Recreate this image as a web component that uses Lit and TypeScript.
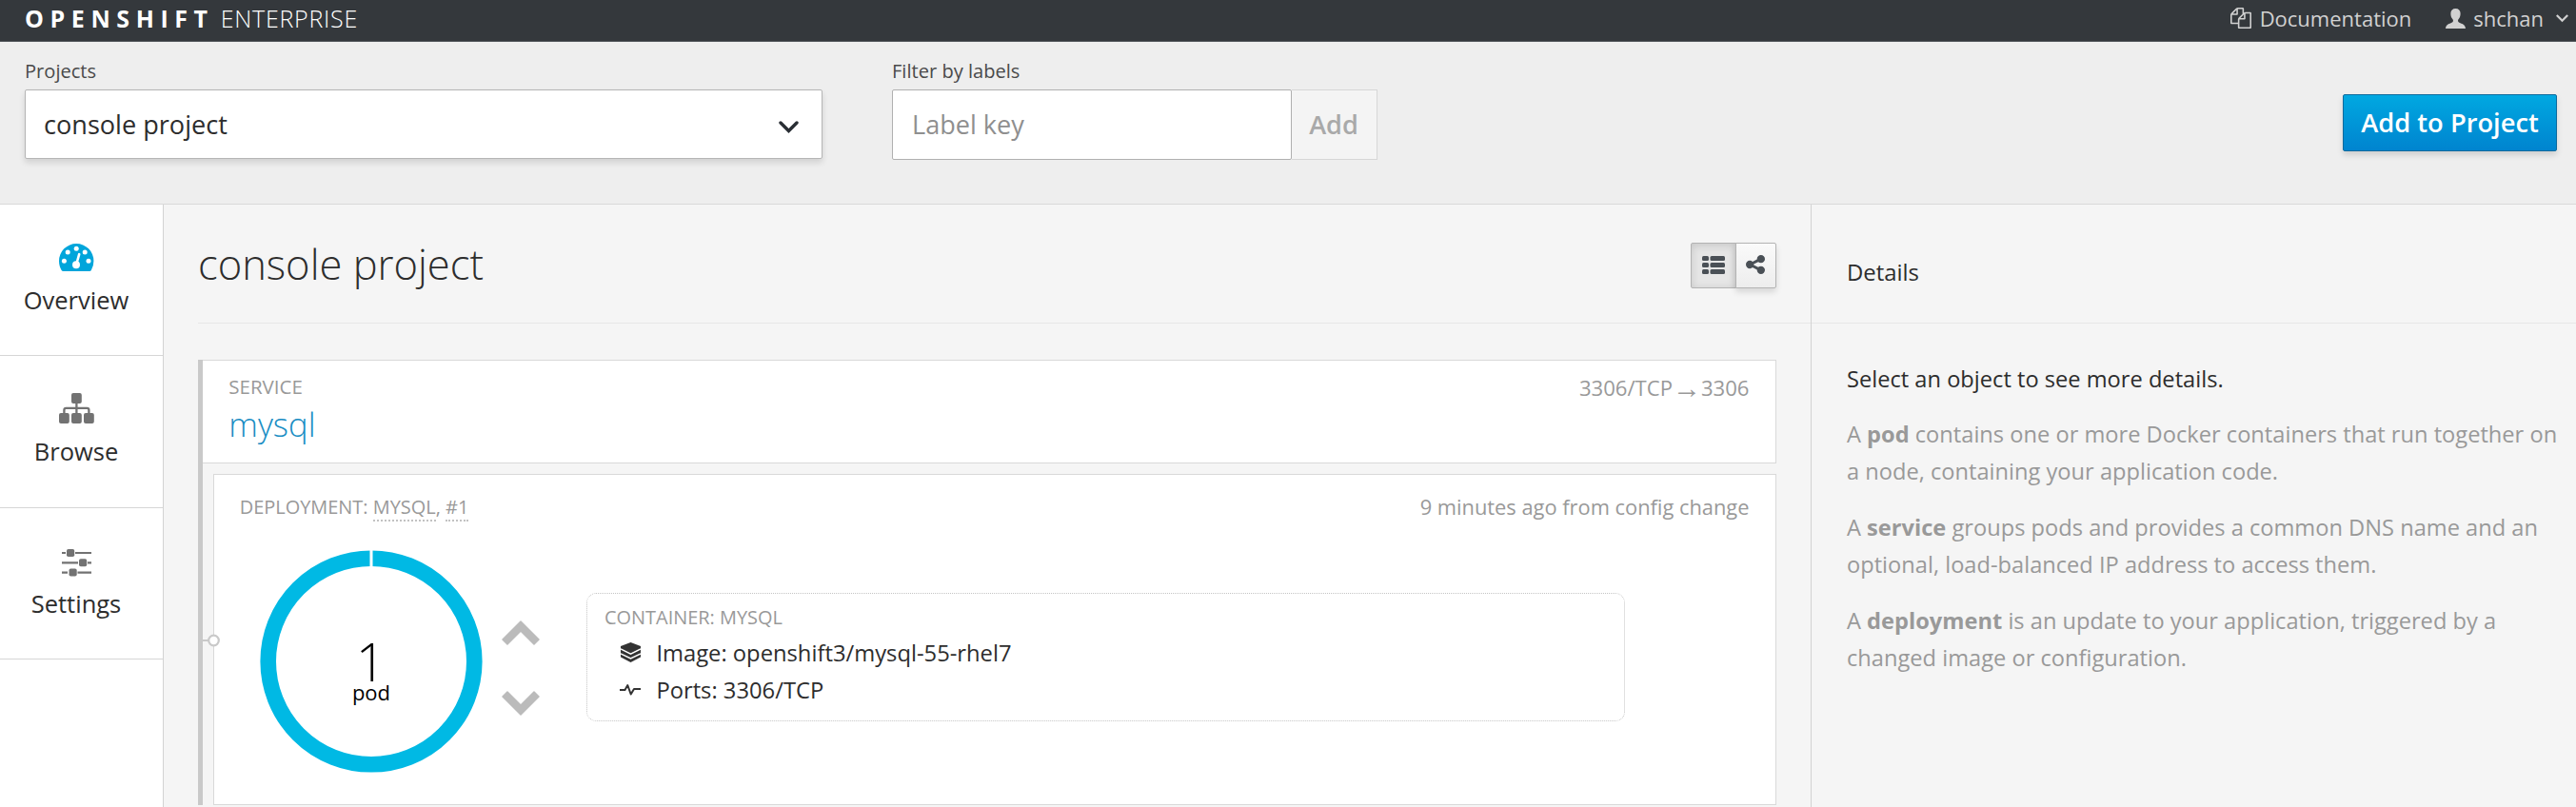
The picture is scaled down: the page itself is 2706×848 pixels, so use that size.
import { LitElement, html, css, svg } from "lit";
import { customElement } from "lit/decorators.js";

const docsIcon = html`<svg class="docs-icon" viewBox="0 0 1792 1792"><path fill="currentColor" d="M1696 384q40 0 68 28t28 68v1216q0 40-28 68t-68 28h-960q-40 0-68-28t-28-68v-288h-544q-40 0-68-28t-28-68v-672q0-40 20-88t48-76l408-408q28-28 76-48t88-20h416q40 0 68 28t28 68v328q68-40 128-40h416zm-544 213l-299 299h299v-299zm-640-384l-299 299h299v-299zm196 647l316-316v-416h-384v416q0 40-28 68t-68 28h-416v640h512v-256q0-40 20-88t48-76zm956 804v-1152h-384v416q0 40-28 68t-68 28h-416v640h896z"/></svg>`;

const userIcon = html`<svg class="user-icon" viewBox="0 0 21 21"><path fill="currentColor" d="M10.5 0C7.3 0 5.4 2 5.4 5c0 1.900.3 3.600 1.200 5 .6 1 1.400 1.700 1.400 2.700 0 1.300-1 1.900-2.500 2.500C2.700 16.300.3 17.200 0 21h21c-.3-3.800-2.700-4.700-5.500-5.800-1.500-.6-2.500-1.200-2.500-2.500 0-1 .8-1.700 1.400-2.700.9-1.400 1.200-3.100 1.200-5 0-3-1.900-5-5.100-5z"/></svg>`;

const overviewIcon = svg`<g transform="translate(0 -1)">
  <path fill="#00a5db" d="M18.200 3A18.200 18.200 0 0 0 0 21.200c0 3.600 1 6.900 2.600 9.700.4.700 1 1.100 1.800 1.100h27.600c.8 0 1.400-.4 1.800-1.100a18.200 18.200 0 0 0 2.600-9.700A18.200 18.200 0 0 0 18.200 3z"/>
  <g fill="#fff"><circle cx="5.400" cy="21.200" r="2.500"/><circle cx="9.200" cy="12.100" r="2.500"/><circle cx="18.200" cy="8.200" r="2.500"/><circle cx="27.200" cy="12.100" r="2.500"/><circle cx="31" cy="21.200" r="2.500"/><circle cx="18" cy="25.300" r="4"/></g>
  <path stroke="#fff" stroke-width="2.600" stroke-linecap="round" d="M18.300 24.500l2.900-10.300"/></g>`;

const browseIcon = svg`
  <g fill="#727272"><rect x="13" y="0" width="10.800" height="11" rx="2"/><rect x="0" y="21" width="10.800" height="11" rx="2"/><rect x="13" y="21" width="10.800" height="11" rx="2"/><rect x="26" y="21" width="10.800" height="11" rx="2"/></g>
  <path fill="none" stroke="#727272" stroke-width="2.300" d="M18.400 10v12M5.400 22v-4.200q0-2 2-2h22q2 0 2 2V22"/>`;

const settingsIcon = svg`
  <path stroke="#727272" stroke-width="2.200" d="M3 8h4M17 8h17M3 18.300h17M30 18.300h4M3 28.600h6M19.500 28.600h14.500"/>
  <g fill="#727272"><rect x="8" y="4" width="8.200" height="8" rx="1.800"/><rect x="21" y="14.300" width="8.200" height="8" rx="1.800"/><rect x="10.500" y="24.600" width="8.200" height="8" rx="1.800"/></g>`;

const navItems = [
  { label: "Overview", icon: overviewIcon },
  { label: "Browse", icon: browseIcon },
  { label: "Settings", icon: settingsIcon },
];

@customElement("app-root")
export class AppRoot extends LitElement {
  static styles = css`
    :host { display: flex; flex-direction: column; height: 848px; overflow: hidden; background: #f5f5f5; color: #2d2d2d; font-family: "Open Sans", sans-serif; }
    * { box-sizing: border-box; }
    svg { display: block; flex: none; }
    .topbar { height: 44px; flex: none; display: flex; align-items: center; justify-content: space-between; padding: 0 8px 6px 26px; background: #34383c; border-bottom: 1px solid #53585c; color: #d1d1d1; line-height: 30px; }
    .brand { display: flex; color: #fff; font-size: 25px; white-space: nowrap; }
    .brand-name { font-weight: 700; letter-spacing: 6.600px; }
    .brand-edition { font-weight: 300; letter-spacing: 0.750px; margin-left: 7px; }
    .account { display: flex; align-items: center; font-size: 22px; }
    .docs-icon { width: 22px; height: 22px; margin-right: 8.500px; }
    .user-icon { width: 21px; height: 21px; margin: 2px 8px 0 36px; }
    .caret { margin: 2px 0 0 13px; }

    .filters { height: 171px; flex: none; display: flex; align-items: flex-start; padding: 21px 20px 0 26px; background: #eee; border-bottom: 1px solid #d9d9d9; }
    .label { font-size: 20.100px; line-height: 20px; margin-bottom: 9px; color: #4a4a4a; }
    .select { width: 838px; height: 73px; display: flex; align-items: center; justify-content: space-between; padding: 0 24px 0 19px; font-size: 27.100px; background: #fff; border: 1px solid #b5b5b5; border-radius: 2px; box-shadow: 0 4px 6px rgba(0,0,0,.12); }
    .chevron { margin-top: 5px; }
    .filter { margin-left: 73px; }
    .input-row { display: flex; font-size: 27.100px; line-height: 72px; }
    .input { width: 420px; height: 74px; padding-left: 20px; background: #fff; border: 1px solid #b0b0b0; border-radius: 2px; color: #8f8f8f; }
    .add { width: 90px; height: 74px; padding-right: 1px; text-align: center; font-weight: 600; color: #a9a9a9; background: #f4f4f4; border: 1px solid #d6d6d6; border-left: 0; }
    .primary { width: 225px; height: 60px; margin: 34px 0 0 auto; border: 1px solid #0b6a9d; border-radius: 2px; background: linear-gradient(#00a8e1, #0084cf); box-shadow: 0 4px 6px rgba(0,0,0,.13); color: #fff; font-size: 27.300px; font-weight: 600; line-height: 57px; text-align: center; }

    .body { flex: 1; min-height: 0; display: flex; }
    .sidebar { width: 172px; flex: none; background: #fff; border-right: 1px solid #d3d3d3; }
    .nav-item { height: 159.330px; display: flex; flex-direction: column; align-items: center; padding: 39px 11px 0 0; border-bottom: 1px solid #d6d6d6; font-size: 25.500px; line-height: 30px; }
    .nav-icon { width: 37px; height: 33px; margin-bottom: 13px; }

    .main { width: 1730px; flex: none; padding-left: 36px; }
    .main-head { height: 125px; display: flex; align-items: center; justify-content: space-between; padding: 3px 36px 0 0; border-bottom: 1px solid #e7e7e7; }
    .title { margin: -2px 0 0; font-size: 43.500px; font-weight: 300; line-height: 50px; }
    .views { display: flex; height: 48px; }
    .view { display: flex; align-items: center; justify-content: center; border: 1px solid #b3b3b3; }
    .view-list { width: 48px; padding-right: 1px; background: #e6e6e6; border-radius: 2px 0 0 2px; box-shadow: inset 0 2px 10px rgba(0,0,0,.14); }
    .view-graph { width: 43px; padding: 0 2px 1px 0; margin-left: -1px; background: linear-gradient(#fafafa, #ededed); border-radius: 0 2px 2px 0; box-shadow: 0 4px 6px rgba(0,0,0,.12); }

    .group { margin: 38px 36px 0 0; border-left: 5px solid #c9c9c9; }
    .card { background: #fff; border: 1px solid #d9d9d9; }
    .service { height: 109px; display: flex; justify-content: space-between; padding: 17px 27.500px 0 27.300px; border-left: 0; }
    .kind { font-size: 20.500px; line-height: 20px; color: #999; }
    .service-name { margin-top: 10px; font-size: 34.700px; font-weight: 300; line-height: 40px; color: #1a8ec4; }
    .ports { height: 22px; display: flex; font-size: 22.100px; line-height: 23px; color: #999; }
    .arrow { font-family: "Liberation Sans", sans-serif; font-size: 30px; width: 30px; }
    .deployment { height: 348px; margin: 11px 0 0 11px; padding: 23px 27.500px 0 26.700px; position: relative; }
    .deploy-head { height: 21px; display: flex; justify-content: space-between; font-size: 19.950px; line-height: 21px; color: #999; white-space: nowrap; }
    .dotted { border-bottom: 2px dotted #c2c2c2; }
    .when { font-size: 21.850px; line-height: 22px; }
    .link-node { position: absolute; left: -13px; top: 160px; }
    .deploy-body { display: flex; align-items: flex-start; padding: 35px 0 0 21.300px; }
    .ring { width: 234px; height: 234px; display: grid; }
    .ring svg, .count { grid-area: 1 / 1; }
    .count { display: flex; flex-direction: column; align-items: center; padding-top: 89px; color: #000; }
    .number { font-size: 55px; font-weight: 300; line-height: 56px; margin-right: 1px; }
    .unit { font-size: 22px; line-height: 22px; margin-top: -7px; }
    .scale { margin: 74px 0 0 20px; display: grid; gap: 48px; }
    .container { width: 1091px; height: 135px; margin: 45px 0 0 49px; padding: 15px 17px 0 18px; border: 1px dotted #c4c4c4; border-radius: 10px; }
    .container .kind { font-size: 19.950px; }
    .facts { padding: 8px 0 0 16px; font-size: 23.750px; line-height: 39px; }
    .fact { display: flex; align-items: center; gap: 16.400px; }
    .fact svg { margin-top: -3px; }

    .details { flex: 1; border-left: 1px solid #d3d3d3; }
    .details-head { height: 125px; padding: 55px 0 0 37px; border-bottom: 1px solid #e7e7e7; font-size: 23.900px; line-height: 31px; }
    .details-body { padding: 39px 0 0 37px; font-size: 23.650px; line-height: 39.200px; color: #999; }
    .lead { color: #2d2d2d; margin: 0 0 18.800px; }
    .para { margin: 0 0 19.400px; white-space: nowrap; }
    .term { font-weight: 700; }
  `;

  render() {
    return html`
      <header class="topbar">
        <div class="brand"><span class="brand-name">OPENSHIFT</span><span class="brand-edition">ENTERPRISE</span></div>
        <nav class="account">
          ${docsIcon}<span>Documentation</span>
          ${userIcon}<span>shchan</span>
          <svg class="caret" width="13" height="9" viewBox="0 0 13 9"><path fill="none" stroke="currentColor" stroke-width="2.200" d="M.8.9l5.700 5.800L12.200.9"/></svg>
        </nav>
      </header>
      <section class="filters">
        <div>
          <div class="label">Projects</div>
          <div class="select"><span>console project</span>
            <svg class="chevron" width="21" height="13" viewBox="0 0 21 13"><path fill="none" stroke="#292e34" stroke-width="3.400" stroke-linecap="round" d="M2 2l8.500 8.500L19 2"/></svg>
          </div>
        </div>
        <div class="filter">
          <div class="label">Filter by labels</div>
          <div class="input-row"><div class="input">Label key</div><div class="add">Add</div></div>
        </div>
        <div class="primary">Add to Project</div>
      </section>
      <div class="body">
        <nav class="sidebar">
          ${navItems.map((i) => html`<div class="nav-item"><svg class="nav-icon" viewBox="0 0 37 33">${i.icon}</svg><span>${i.label}</span></div>`)}
        </nav>
        <main class="main">
          <div class="main-head">
            <h1 class="title">console project</h1>
            <div class="views">
              <div class="view view-list"><svg width="24" height="19" viewBox="0 0 24 19"><g fill="#4a5056"><rect width="7" height="5" rx="1.500"/><rect x="8.500" width="15.500" height="5" rx="1.500"/><rect y="7" width="7" height="5" rx="1.500"/><rect x="8.500" y="7" width="15.500" height="5" rx="1.500"/><rect y="14" width="7" height="5" rx="1.500"/><rect x="8.500" y="14" width="15.500" height="5" rx="1.500"/></g></svg></div>
              <div class="view view-graph"><svg width="20" height="20" viewBox="128 128 1536 1536"><path fill="#4a5056" d="M1344 1024q133 0 226.500 93.500t93.500 226.500-93.500 226.500-226.500 93.500-226.500-93.500-93.500-226.500q0-12 2-34l-360-180q-92 86-218 86-133 0-226.500-93.500t-93.500-226.500 93.500-226.500 226.500-93.500q126 0 218 86l360-180q-2-22-2-34 0-133 93.500-226.500t226.500-93.500 226.500 93.500 93.500 226.500-93.500 226.500-226.500 93.500q-126 0-218-86l-360 180q2 22 2 34t-2 34l360 180q92-86 218-86z"/></svg></div>
            </div>
          </div>
          <div class="group">
            <section class="card service">
              <div><div class="kind">SERVICE</div><div class="service-name">mysql</div></div>
              <div class="ports"><span>3306/TCP</span><span class="arrow">→</span><span>3306</span></div>
            </section>
            <section class="card deployment">
              <svg class="link-node" width="20" height="28" viewBox="0 0 20 28"><path stroke="#c9c9c9" stroke-width="2" d="M1 14h6"/><circle cx="12.500" cy="14" r="5.300" fill="#fff" stroke="#c9c9c9" stroke-width="2.200"/></svg>
              <div class="deploy-head">
                <div>DEPLOYMENT: <span class="dotted">MYSQL</span>, <span class="dotted">#1</span></div>
                <div class="when">9 minutes ago from config change</div>
              </div>
              <div class="deploy-body">
                <div class="ring">
                  <svg width="234" height="234" viewBox="0 0 234 234"><circle cx="117" cy="117" r="108.300" fill="none" stroke="#00b9e4" stroke-width="16.600"/><path stroke="#fff" stroke-width="3" d="M117 0v18"/></svg>
                  <div class="count"><div class="number">1</div><div class="unit">pod</div></div>
                </div>
                <div class="scale">
                  <svg width="40" height="26" viewBox="0 0 40 26"><path fill="#bbb" stroke="#bbb" stroke-width="1.500" stroke-linejoin="round" d="M20 1L39 20l-5 5-14-14L6 25l-5-5z"/></svg>
                  <svg width="40" height="26" viewBox="0 0 40 26"><path fill="#bbb" stroke="#bbb" stroke-width="1.500" stroke-linejoin="round" d="M20 25L39 6l-5-5-14 14L6 1 1 6z"/></svg>
                </div>
                <div class="container">
                  <div class="kind">CONTAINER: MYSQL</div>
                  <div class="facts">
                    <div class="fact"><svg width="22" height="21" viewBox="0 0 22 21"><path fill="#333" d="M11.500 0L22 4v11.500L11.500 21 1 15.500V4z"/><path fill="none" stroke="#fff" stroke-width="1.500" d="M1 6.900l10.500 5.200L22 6.900M1 11.900l10.500 5L22 11.900"/></svg><span>Image: openshift3/mysql-55-rhel7</span></div>
                    <div class="fact"><svg width="22" height="13" viewBox="0 0 22 13"><path fill="none" stroke="#333" stroke-width="2" stroke-linejoin="round" d="M0 7h5.500l2.800-5L11.700 11.500 15 6h7"/></svg><span>Ports: 3306/TCP</span></div>
                  </div>
                </div>
              </div>
            </section>
          </div>
        </main>
        <aside class="details">
          <div class="details-head">Details</div>
          <div class="details-body">
            <p class="lead">Select an object to see more details.</p>
            <p class="para">A <span class="term">pod</span> contains one or more Docker containers that run together on<br>a node, containing your application code.</p>
            <p class="para">A <span class="term">service</span> groups pods and provides a common DNS name and an<br>optional, load-balanced IP address to access them.</p>
            <p class="para">A <span class="term">deployment</span> is an update to your application, triggered by a<br>changed image or configuration.</p>
          </div>
        </aside>
      </div>`;
  }
}
